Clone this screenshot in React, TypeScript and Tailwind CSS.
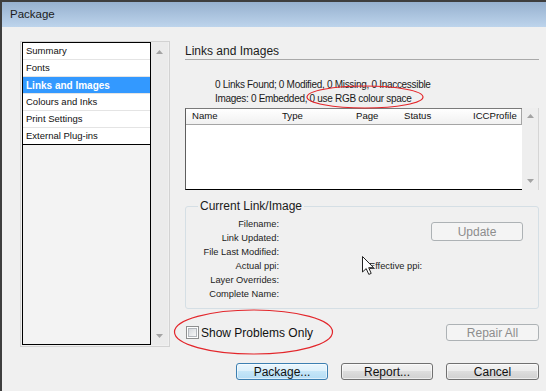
const ITEMS = ['Summary', 'Fonts', 'Links and Images', 'Colours and Inks', 'Print Settings', 'External Plug-ins'];
const LABELS = ['Filename:', 'Link Updated:', 'File Last Modified:', 'Actual ppi:', 'Layer Overrides:', 'Complete Name:'];

function Arrow({ up }: { up?: boolean }) {
  return (
    <svg width="7" height="4" viewBox="0 0 7 4" className="block">
      <polygon points={up ? '0,4 3.5,0 7,4' : '0,0 7,0 3.5,4'} fill="#a3a3a3" />
    </svg>
  );
}

function Btn({ label, kind = 'normal', className = '' }: { label: string; kind?: 'normal' | 'default' | 'disabled'; className?: string }) {
  const look =
    kind === 'default'
      ? 'border-[#3c7fb1] bg-[linear-gradient(#eaf6fd_0%,#dcf0fb_50%,#c5e6f8_50%,#b4dcf4_100%)] text-[#111] shadow-[inset_0_0_0_1px_rgba(255,255,255,0.55)]'
      : kind === 'disabled'
        ? 'border-[#adb2b5] bg-[#f4f4f4] text-[#8d8d8d]'
        : 'border-[#707070] bg-[linear-gradient(#f3f3f3_0%,#ebebeb_50%,#dddddd_50%,#d0d0d0_100%)] text-[#111] shadow-[inset_0_0_0_1px_rgba(255,255,255,0.6)]';
  return (
    <div className={`flex items-center justify-center rounded-[3px] border text-[12px] leading-none ${look} ${className}`}>
      {label}
    </div>
  );
}

export default function App() {
  return (
    <div className="relative flex h-[391px] w-[546px] flex-col overflow-hidden border-l-2 border-t-2 border-[#3e3e3e] bg-[#f0f0f0] font-['Liberation_Sans',Arial,sans-serif] text-[#1a1a1a]">
      {/* title bar */}
      <div className="flex h-[25px] shrink-0 items-center bg-gradient-to-b from-[#97b1cf] to-[#bdd4ec] pl-[8px] text-[11.5px] text-[#1c1c1c]">
        Package
      </div>

      <div className="flex flex-col pl-[18px] pr-[7px] pt-[14px]">
        <div className="flex h-[306px] gap-[15px]">
          {/* left list */}
          <div className="flex w-[150px] shrink-0 border border-[#d2d2d2] px-[1px] pb-[1px]">
            <div className="flex w-[129px] flex-col border border-black bg-[#f3f3f3]">
              {ITEMS.map((it, i) => {
                const sel = i === 2;
                const last = i === ITEMS.length - 1;
                return (
                  <div
                    key={it}
                    className={`flex h-[17px] items-center border-b pl-[3px] ${last ? 'border-black' : 'border-[#e4e4e4]'} ${
                      sel ? 'bg-[#3399ff] text-[10px] font-bold text-white' : 'bg-white text-[9.5px] text-[#111]'
                    }`}
                  >
                    {it}
                  </div>
                );
              })}
            </div>
            <div className="flex w-[17px] flex-col items-center justify-between bg-[#ebebeb] pb-[7px] pt-[8px]">
              <Arrow up />
              <Arrow />
            </div>
          </div>

          {/* right side */}
          <div className="flex w-[354px] flex-col">
            <div className="border-b border-[#a9a9a9] pb-[1px] pt-[3px] text-[12px] leading-[14px] text-[#1b1b1b]">Links and Images</div>

            <div className="mt-[18px] pl-[30px] text-[10px] leading-[14px] tracking-[-0.3px]">
              <div>0 Links Found; 0 Modified, 0 Missing, 0 Inaccessible</div>
              <div>Images: 0 Embedded, 0 use RGB colour space</div>
            </div>

            {/* table */}
            <div className="mt-[2px] flex h-[82px] border-r border-[#d5d5d5]">
              <div className="flex flex-1 flex-col border-b border-l border-t border-b-black border-l-[#5e5e5e] border-t-[#7a7a7a] bg-white">
                <div className="flex h-[16px] items-center border-b border-[#a5a5a5] bg-gradient-to-b from-white to-[#f1f1f1] text-[9.6px] text-[#111]">
                  <span className="w-[96px] pl-[6px]">Name</span>
                  <span className="w-[74px]">Type</span>
                  <span className="w-[48px]">Page</span>
                  <span className="w-[69px]">Status</span>
                  <span className="flex-1 border-r border-[#a5a5a5]">ICCProfile</span>
                </div>
              </div>
              <div className="flex w-[16px] flex-col items-center justify-between bg-[#eeeeee] pb-[7px] pt-[6px]">
                <Arrow up />
                <Arrow />
              </div>
            </div>

            {/* group box */}
            <fieldset className="mt-[9px] h-[110px] rounded-[3px] border border-[#d5dfe5] p-0">
              <legend className="ml-[12px] px-[2px] text-[12px] leading-[14px] text-[#1b1b1b]">Current Link/Image</legend>
              <div className="flex pt-[4px] text-[9.3px] leading-[14.1px] text-[#222]">
                <div className="w-[93px] text-right">
                  {LABELS.map((l) => (
                    <div key={l}>{l}</div>
                  ))}
                </div>
                <div className="flex-1 pl-[90px]">
                  {LABELS.map((l, i) => (
                    <div key={l}>{i === 3 ? 'Effective ppi:' : '\u00a0'}</div>
                  ))}
                </div>
                <Btn label="Update" kind="disabled" className="mr-[15px] mt-[5px] h-[19px] w-[92px] text-[12.5px]" />
              </div>
            </fieldset>

            <div className="mt-[15px] flex h-[17px] items-center justify-between">
              <div className="ml-[1px] flex items-center">
                <div className="h-[13px] w-[13px] border border-[#8e8f8f] bg-white p-[1px]">
                  <div className="h-full w-full border border-[#b3b7bc] bg-gradient-to-br from-[#d6d9dd] to-[#f7f7f7]" />
                </div>
                <span className="ml-[2px] text-[12px] leading-none text-[#111]">Show Problems Only</span>
              </div>
              <Btn label="Repair All" kind="disabled" className="h-[17px] w-[93px]" />
            </div>
          </div>
        </div>

        <div className="mt-[16px] flex justify-end gap-[13px]">
          <Btn label="Package..." kind="default" className="h-[17px] w-[92px]" />
          <Btn label="Report..." className="h-[17px] w-[92px]" />
          <Btn label="Cancel" className="h-[17px] w-[93px]" />
        </div>
      </div>

      {/* mouse cursor over the dialog */}
      <svg className="pointer-events-none absolute left-[359px] top-[253px]" width="14" height="21" viewBox="0 0 14 21">
        <path d="M1.5 1.5 L1.5 17 L5.2 13.6 L7.8 19.4 L10.2 18.4 L7.7 12.7 L12.6 12.7 Z" fill="#fff" stroke="#222" strokeWidth="1" strokeLinejoin="round" />
      </svg>

      {/* red annotation rings */}
      <svg className="pointer-events-none absolute left-[-2px] top-[-2px]" width="546" height="391" viewBox="0 0 546 391">
        <ellipse cx="365" cy="97" rx="58" ry="11" fill="none" stroke="#e3262b" strokeWidth="1.2" />
        <ellipse cx="253.5" cy="332" rx="79" ry="22" fill="none" stroke="#e3262b" strokeWidth="1.2" />
      </svg>
    </div>
  );
}
